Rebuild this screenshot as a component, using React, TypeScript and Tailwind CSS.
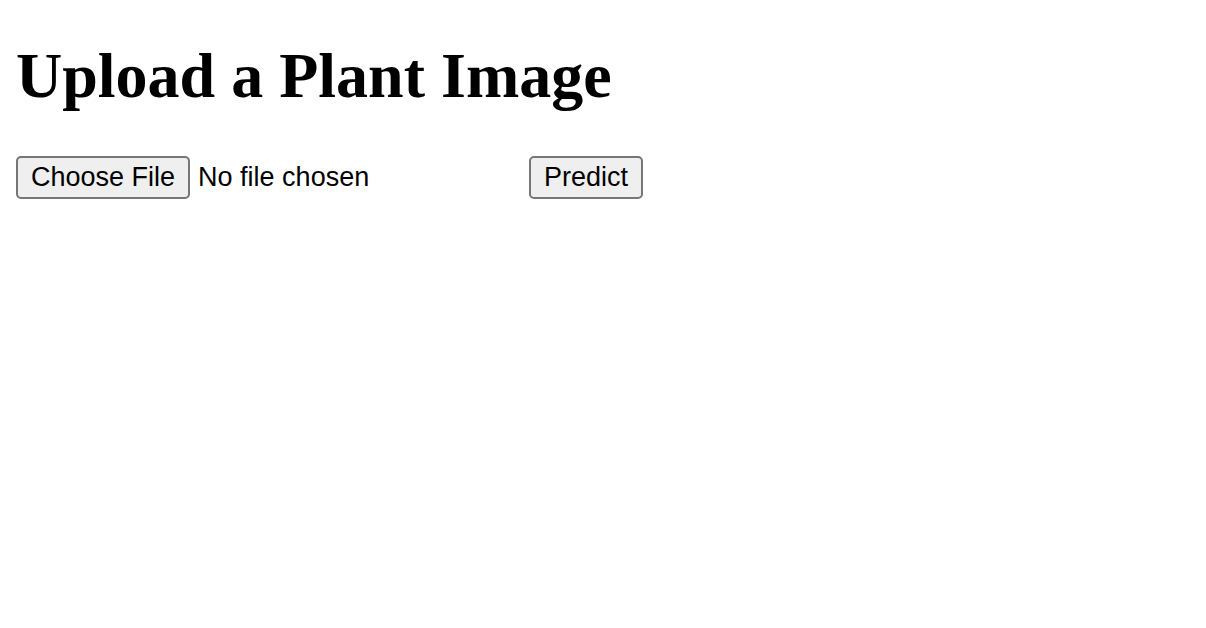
export default function App() {
  return (
    <main className="min-h-screen bg-white px-4 pt-9 text-black">
      <h1 className="mb-10 font-['Liberation_Serif','Times_New_Roman',serif] text-[64px] leading-[80px] font-bold">
        Upload a Plant Image
      </h1>
      <form
        className="flex items-center gap-2 font-['Liberation_Sans',Arial,sans-serif] text-[27px] leading-[31px]"
        onSubmit={(event) => event.preventDefault()}
      >
        <input
          type="file"
          name="image"
          accept="image/*"
          aria-label="Plant image"
          className="w-[505px] file:me-2 file:rounded-[5px] file:border-2 file:border-solid file:border-[#767676] file:bg-[#efefef] file:px-[13px] file:py-1 file:text-black"
        />
        <button
          type="submit"
          className="rounded-[5px] border-2 border-[#767676] bg-[#efefef] px-[13px] py-1"
        >
          Predict
        </button>
      </form>
    </main>
  );
}
